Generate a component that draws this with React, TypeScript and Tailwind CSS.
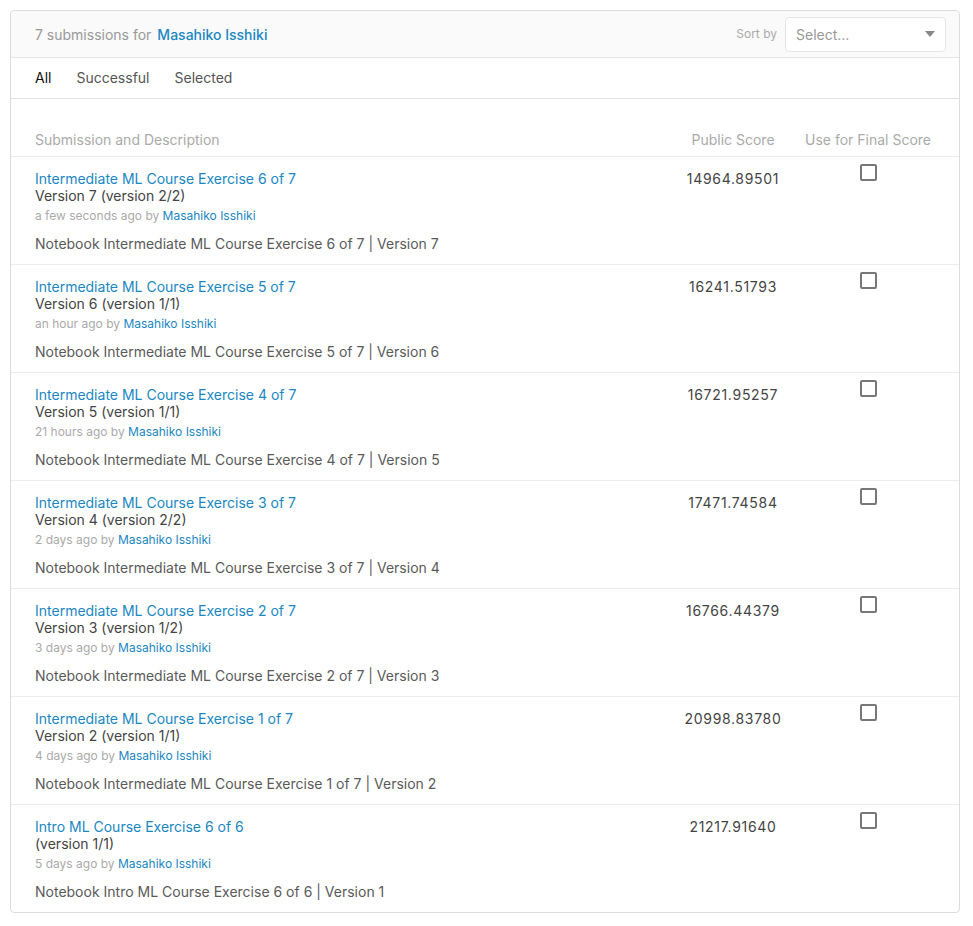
import React, { useState } from 'react';

type Submission = {
  title: string;
  version: string;
  when: string;
  description: string;
  score: string;
};

const submissions: Submission[] = [
  {
    title: 'Intermediate ML Course Exercise 6 of 7',
    version: 'Version 7 (version 2/2)',
    when: 'a few seconds ago',
    description: 'Notebook Intermediate ML Course Exercise 6 of 7 | Version 7',
    score: '14964.89501',
  },
  {
    title: 'Intermediate ML Course Exercise 5 of 7',
    version: 'Version 6 (version 1/1)',
    when: 'an hour ago',
    description: 'Notebook Intermediate ML Course Exercise 5 of 7 | Version 6',
    score: '16241.51793',
  },
  {
    title: 'Intermediate ML Course Exercise 4 of 7',
    version: 'Version 5 (version 1/1)',
    when: '21 hours ago',
    description: 'Notebook Intermediate ML Course Exercise 4 of 7 | Version 5',
    score: '16721.95257',
  },
  {
    title: 'Intermediate ML Course Exercise 3 of 7',
    version: 'Version 4 (version 2/2)',
    when: '2 days ago',
    description: 'Notebook Intermediate ML Course Exercise 3 of 7 | Version 4',
    score: '17471.74584',
  },
  {
    title: 'Intermediate ML Course Exercise 2 of 7',
    version: 'Version 3 (version 1/2)',
    when: '3 days ago',
    description: 'Notebook Intermediate ML Course Exercise 2 of 7 | Version 3',
    score: '16766.44379',
  },
  {
    title: 'Intermediate ML Course Exercise 1 of 7',
    version: 'Version 2 (version 1/1)',
    when: '4 days ago',
    description: 'Notebook Intermediate ML Course Exercise 1 of 7 | Version 2',
    score: '20998.83780',
  },
  {
    title: 'Intro ML Course Exercise 6 of 6',
    version: '(version 1/1)',
    when: '5 days ago',
    description: 'Notebook Intro ML Course Exercise 6 of 6 | Version 1',
    score: '21217.91640',
  },
];

const tabs = ['All', 'Successful', 'Selected'];

export default function App() {
  const [activeTab, setActiveTab] = useState('All');
  const [selected, setSelected] = useState<Record<number, boolean>>({});

  return (
    <div className="min-h-screen bg-white p-[10px] pr-[13px] font-['Inter',_'Liberation_Sans',_sans-serif] text-[14px]">
      <div className="border border-[#dcdcdc] rounded-[4px] bg-white">
        {/* header */}
        <div className="h-[47px] flex items-center justify-between bg-[#fafafa] border-b border-[#e6e6e6] rounded-t-[4px] pl-6 pr-[13px]">
          <div className="flex items-center gap-[6px]">
            <span className="text-[#999]">7 submissions for</span>
            <span className="text-[#1a87c2] font-medium">Masahiko Isshiki</span>
          </div>
          <div className="flex items-center gap-2">
            <span className="text-[12px] text-[#aaa]">Sort by</span>
            <button className="w-[161px] h-[35px] flex items-center justify-between bg-white border border-[#e6e6e6] rounded-[4px] pl-[10px] pr-[10px]">
              <span className="text-[#999]">Select...</span>
              <svg width="10" height="6" viewBox="0 0 10 6">
                <path d="M0 0h10L5 6z" fill="#888" />
              </svg>
            </button>
          </div>
        </div>

        {/* tabs */}
        <div className="h-[41px] flex items-center gap-[25px] pl-6 pb-[1px] border-b border-[#e0e0e0]">
          {tabs.map((t) => (
            <button
              key={t}
              onClick={() => setActiveTab(t)}
              className={activeTab === t ? 'text-[#111]' : 'text-[#555]'}
            >
              {t}
            </button>
          ))}
        </div>

        {/* table header */}
        <div className="mt-[32px] h-[26px] grid grid-cols-[1fr_120px_150px] pl-6 pr-4 items-start leading-[18px] border-b border-[#ececec] text-[#aaa]">
          <div>Submission and Description</div>
          <div className="text-center">Public Score</div>
          <div className="text-center">Use for Final Score</div>
        </div>

        {/* rows */}
        {submissions.map((s, i) => (
          <div
            key={i}
            className={`grid grid-cols-[1fr_120px_150px] pl-6 pr-4 pt-[13px] ${
              i < submissions.length - 1 ? 'h-[108px] border-b border-[#ececec]' : 'h-[107px]'
            }`}
          >
            <div className="flex flex-col">
              <a className="text-[#1a87c2] leading-[18px] w-fit cursor-pointer">{s.title}</a>
              <div className="text-[#444] leading-[17px] mt-[-1px]">{s.version}</div>
              <div className="text-[12px] leading-[16px] mt-[4px] text-[#aaa]">
                {s.when} by <span className="text-[#1a87c2]">Masahiko Isshiki</span>
              </div>
              <div className="text-[#5a5a5a] mt-[11px] leading-[18px]">{s.description}</div>
            </div>
            <div className="text-center text-[#444] leading-[18px] tracking-[0.7px]">{s.score}</div>
            <div className="flex justify-center">
              <button
                onClick={() => setSelected({ ...selected, [i]: !selected[i] })}
                className="w-[17px] h-[17px] mt-[-6px] border-2 border-[#777] rounded-[2px] bg-white"
              />
            </div>
          </div>
        ))}
      </div>
    </div>
  );
}
